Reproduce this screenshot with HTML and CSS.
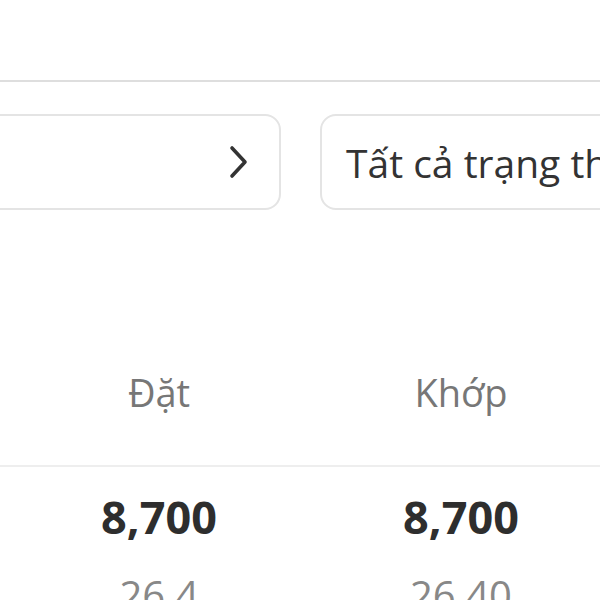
FILE: index.html
```html
<!DOCTYPE html>
<html lang="vi">
<head>
    <meta charset="UTF-8">
    <meta name="viewport" content="width=device-width, initial-scale=1.0">
    <title>Lệnh đặt</title>
    <link rel="stylesheet" href="styles.css">
</head>
<body>
    <div class="topbar"></div>

    <div class="filters">
        <div class="filter filter-date">
            <svg class="chevron" width="22" height="34" viewBox="0 0 22 34">
                <path d="M4 3 L17 17 L4 31" fill="none" stroke="#333" stroke-width="3.6" stroke-linecap="round" stroke-linejoin="round"/>
            </svg>
        </div>
        <div class="filter filter-status">Tất cả trạng thái</div>
    </div>

    <div class="table">
        <div class="row head">
            <div class="cell">Đặt</div>
            <div class="cell">Khớp</div>
        </div>
        <div class="row item">
            <div class="cell">
                <div class="qty">8,700</div>
                <div class="price">26.4</div>
            </div>
            <div class="cell">
                <div class="qty">8,700</div>
                <div class="price">26.40</div>
            </div>
        </div>
    </div>
</body>
</html>
```

FILE: styles.css
```css
body {
    font-family: "Open Sans", "Noto Sans", sans-serif;
    background-color: #fff;
    color: #333;
    margin: 0;
    padding: 0;
    overflow: hidden;
}

.topbar {
    height: 80px;
    border-bottom: 2px solid #dedede;
}

.filters {
    display: flex;
    gap: 39px;
    margin-top: 32px;
    margin-left: -60px;
}

.filter {
    flex-shrink: 0;
    box-sizing: border-box;
    height: 96px;
    border: 2px solid #e4e4e4;
    border-radius: 16px;
    display: flex;
    align-items: center;
}

.filter-date {
    width: 341px;
    justify-content: flex-end;
    padding-right: 29px;
}

.filter-status {
    width: 400px;
    padding-left: 24px;
    font-size: 39px;
    white-space: nowrap;
    overflow: hidden;
}

.row {
    display: flex;
    padding-left: 8px;
}

.cell {
    flex: none;
    width: 302px;
    text-align: center;
}

.head {
    padding-top: 156px;
    padding-bottom: 47px;
    border-bottom: 2px solid #eeeeee;
    font-size: 38px;
    color: #777;
}

.item {
    padding-top: 19px;
}

.qty {
    font-size: 45px;
    font-weight: bold;
    color: #2e2e2e;
}

.price {
    margin-top: 20px;
    font-size: 40px;
    color: #888;
}
```
